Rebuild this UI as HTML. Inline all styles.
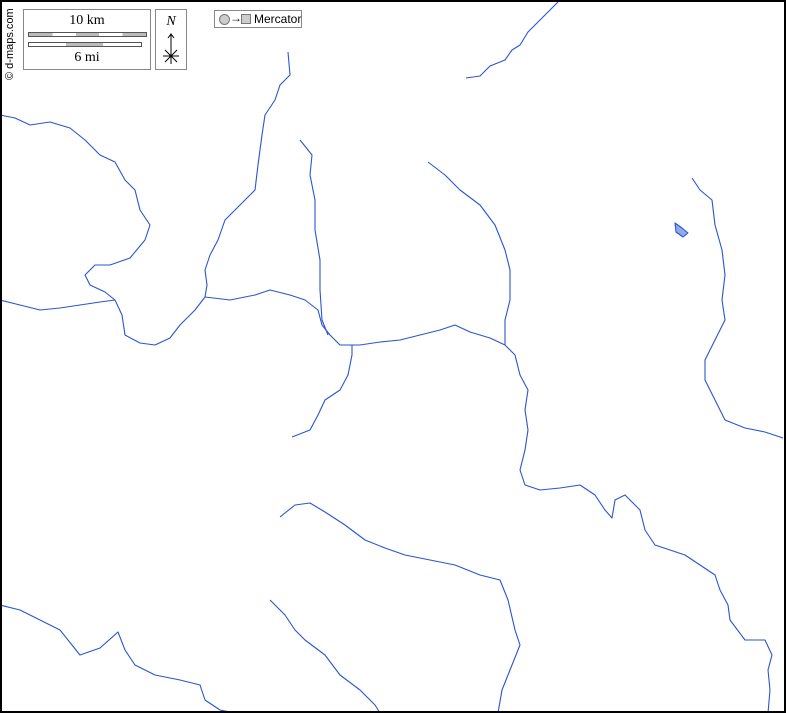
<!DOCTYPE html>
<html><head><style>
html,body{margin:0;padding:0;background:#fff}
body{width:786px;height:713px;position:relative;overflow:hidden;font-family:"Liberation Serif",serif}
.frame{position:absolute;left:0;top:0;width:782px;height:709px;border:2px solid #000}
.box{position:absolute;border:1px solid #888;background:#fff}
</style></head><body>
<svg width="786" height="713" style="position:absolute;left:0;top:0" fill="none" stroke="#2a55d0" stroke-width="1.1" stroke-linejoin="round">
<polyline points="466,78 480,76 490,66 505,60 512,50 520,45 528,32 535,25 548,12 558,2"/>
<polyline points="288,52 290,75 280,85 275,100 265,115 262,135 258,165 255,190 240,205 225,220 218,240 210,255 205,270 207,285 205,297"/>
<polyline points="0,115 15,118 30,125 50,122 70,128 85,140 100,155 115,162 125,180 135,190 140,210 150,225 145,240 130,258 110,265 95,265 85,275 90,285 105,292 115,300 122,315 125,335 140,343 155,345 170,338 180,325 195,310 205,297"/>
<polyline points="0,300 20,305 40,310 60,308 80,305 100,302 115,300"/>
<polyline points="205,297 230,300 255,295 270,290 290,295 305,300 318,310 322,325 330,335 340,345 360,345 380,342 400,340 420,335 440,330 455,325 470,332 490,338 505,345 515,355 520,375 528,390 525,410 528,430 525,450 520,470 525,485 540,490 560,488 580,485 595,495 605,510 612,518 615,500 625,495 640,510 645,530 655,545 670,550 685,555 700,565 715,575 720,590 728,605 730,620 745,640 765,640 772,655 768,670 770,690 768,713"/>
<polyline points="300,140 312,155 310,175 315,200 315,230 320,260 320,290 322,320 328,335"/>
<polyline points="428,162 445,175 460,190 480,205 495,225 505,250 510,270 510,300 505,320 505,345"/>
<polyline points="352,345 352,355 348,375 340,390 325,400 318,415 310,430 292,437"/>
<polyline points="692,178 700,190 712,200 715,225 722,250 725,275 722,300 725,320 715,340 705,360 705,380 715,400 725,420 745,428 765,432 783,438"/>
<path d="M675,223 L682,228 L688,233 L683,237 L676,232 Z" fill="#2a55d0" fill-opacity="0.5"/>
<polyline points="280,517 295,505 310,503 325,512 345,525 365,540 385,548 405,555 430,560 455,565 480,575 500,580 508,600 515,630 520,645 510,670 502,690 498,713"/>
<polyline points="270,600 285,615 295,630 305,640 325,655 340,675 360,690 375,705 380,713"/>
<polyline points="0,605 20,610 40,620 60,630 72,645 80,655 100,648 118,632 125,650 135,665 155,675 180,680 200,685 205,700 220,710 235,713"/>
</svg>
<div class="frame"></div>
<div style="position:absolute;left:4px;top:80px;transform:rotate(-90deg);transform-origin:0 0;font:11px 'Liberation Sans',sans-serif;white-space:nowrap">© d-maps.com</div>
<div class="box" style="left:23px;top:9px;width:126px;height:59px">
 <div style="position:absolute;top:3px;width:100%;text-align:center;font-size:14px">10 km</div>
 <div style="position:absolute;left:4px;top:22px;width:117px;height:3px;border:1px solid #555;background:linear-gradient(90deg,#bbb 0 20%,#fff 20% 40%,#bbb 40% 60%,#fff 60% 80%,#bbb 80%)"></div>
 <div style="position:absolute;left:4px;top:32px;width:112px;height:3px;border:1px solid #555;background:linear-gradient(90deg,#fff 0 33%,#bbb 33% 66%,#fff 66%)"></div>
 <div style="position:absolute;top:40px;width:100%;text-align:center;font-size:14px">6 mi</div>
</div>
<div class="box" style="left:155px;top:9px;width:30px;height:59px">
 <div style="position:absolute;top:4px;width:100%;text-align:center;font-size:14px;font-style:italic">N</div>
 <svg width="30" height="40" style="position:absolute;left:0;top:20px" stroke="#000" stroke-width="1" fill="none">
  <path d="M15,4 L15,34 M12,8 L15,4 L18,8 M7,26 L23,26 M9,20 L21,32 M21,20 L9,32" />
 </svg>
</div>
<div class="box" style="left:214px;top:10px;width:86px;height:16px;font:12px 'Liberation Sans',sans-serif">
 <span style="position:absolute;left:4px;top:3px;width:9px;height:9px;border-radius:50%;background:#ccc;border:1px solid #777"></span>
 <span style="position:absolute;left:15px;top:0px">→</span>
 <span style="position:absolute;left:26px;top:3px;width:8px;height:8px;background:#ccc;border:1px solid #777"></span>
 <span style="position:absolute;left:39px;top:1px">Mercator</span>
</div>
</body></html>
